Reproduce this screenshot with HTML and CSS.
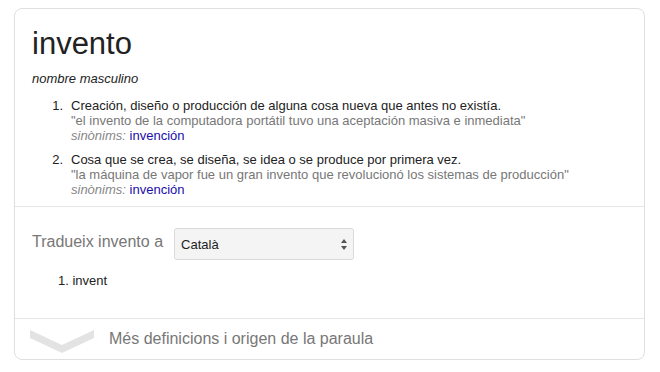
FILE: index.html
```html
<!DOCTYPE html>
<html>
<head>
  <meta charset="utf-8">
  <title>invento - diccionari</title>
  <link rel="stylesheet" href="styles.css">
</head>
<body>
  <div class="card">
    <div class="entry">
      <h1 class="word">invento</h1>
      <div class="pos">nombre masculino</div>

      <ol class="senses">
        <li class="sense">
          <span class="num">1.</span>
          <div class="body">
            <div class="def">Creación, diseño o producción de alguna cosa nueva que antes no existía.</div>
            <div class="example">"el invento de la computadora portátil tuvo una aceptación masiva e inmediata"</div>
            <div class="syn"><i>sinònims:</i> <a href="#">invención</a></div>
          </div>
        </li>
        <li class="sense">
          <span class="num">2.</span>
          <div class="body">
            <div class="def">Cosa que se crea, se diseña, se idea o se produce por primera vez.</div>
            <div class="example">"la máquina de vapor fue un gran invento que revolucionó los sistemas de producción"</div>
            <div class="syn"><i>sinònims:</i> <a href="#">invención</a></div>
          </div>
        </li>
      </ol>
    </div>

    <div class="translate">
      <div class="translate-row">
        <span class="translate-label">Tradueix invento a</span>
        <div class="select">
          <span>Català</span>
          <svg width="6" height="12" viewBox="0 0 6 12">
            <path d="M3 0 L6 4 L0 4 Z M0 7 L6 7 L3 11 Z" fill="#555"/>
          </svg>
        </div>
      </div>
      <div class="translation">1. invent</div>
    </div>

    <div class="more">
      <svg class="chevron" width="64" height="24" viewBox="0 0 64 24">
        <polygon points="0,1 32,16 64,1 64,9 32,24 0,9" fill="#e3e3e3"/>
      </svg>
      <span>Més definicions i origen de la paraula</span>
    </div>
  </div>
</body>
</html>
```

FILE: styles.css
```css
body { margin: 0; padding: 8px 0 0 14px; background: #fff; font-family: "Liberation Sans", Arial, sans-serif; color: #222; }
.card { width: 631px; height: 352px; box-sizing: border-box; border: 1px solid #dfdfdf; border-radius: 8px; display: flex; flex-direction: column; }

.entry { padding: 16px 17px 9px; }
.word { margin: 0; font-size: 31px; font-weight: normal; line-height: 37px; color: #222; }
.pos { margin-top: 9px; font-size: 13px; font-style: italic; line-height: 15px; }

.senses { list-style: none; margin: 12px 0 0; padding: 0; }
.sense { display: flex; font-size: 13px; line-height: 15px; }
.sense + .sense { margin-top: 9px; }
.num { width: 31px; text-align: right; margin-right: 8px; flex: none; }
.example { color: #777; }
.syn i { color: #878787; }
.syn a { color: #1a0dab; text-decoration: none; }

.translate { border-top: 1px solid #e6e6e6; padding: 21px 17px 30px; }
.translate-row { display: flex; align-items: center; }
.translate-label { font-size: 16px; color: #777; margin-right: 11px; margin-bottom: 4px; }
.select { width: 180px; height: 32px; box-sizing: border-box; border: 1px solid #dadada; border-radius: 3px; background: #f4f4f4; display: flex; align-items: center; justify-content: space-between; padding: 0 6px 0 6px; font-size: 13px; color: #222; }
.select svg { margin-top: 2px; }
.translation { margin: 13px 0 0 26px; font-size: 13px; line-height: 15px; }

.more { border-top: 1px solid #e6e6e6; flex: 1; display: flex; align-items: center; padding-left: 15px; font-size: 16px; color: #777; }
.chevron { margin-right: 15px; margin-top: 4px; }
```
